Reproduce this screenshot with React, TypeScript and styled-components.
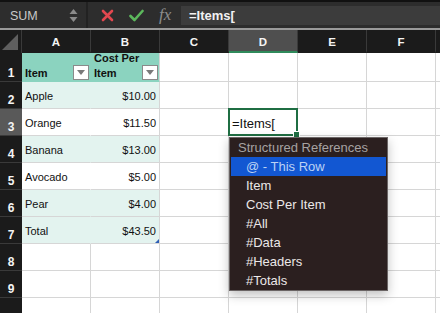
import React from 'react';
import styled, {createGlobalStyle} from 'styled-components';

const GlobalStyle = createGlobalStyle`
  html, body {
    margin: 0;
    padding: 0;
    width: 440px;
    height: 313px;
    overflow: hidden;
    background: #ffffff;
    font-family: "Liberation Sans", Arial, sans-serif;
  }
`;

const COLS = ['A', 'B', 'C', 'D', 'E', 'F'];

type Fill = 'head' | 'band' | 'plain' | 'none';

const rows: {cells: [string, string]; fill: Fill}[] = [
    {cells: ['Item', 'Cost Per Item'], fill: 'head'},
    {cells: ['Apple', '$10.00'], fill: 'band'},
    {cells: ['Orange', '$11.50'], fill: 'plain'},
    {cells: ['Banana', '$13.00'], fill: 'band'},
    {cells: ['Avocado', '$5.00'], fill: 'plain'},
    {cells: ['Pear', '$4.00'], fill: 'band'},
    {cells: ['Total', '$43.50'], fill: 'band'},
    {cells: ['', ''], fill: 'none'},
    {cells: ['', ''], fill: 'none'},
    {cells: ['', ''], fill: 'none'},
];

const menuItems = ['Item', 'Cost Per Item', '#All', '#Data', '#Headers', '#Totals'];

const fillColor = (f: Fill) =>
    f === 'head' ? '#8bd3bf' : f === 'band' ? '#e3f3ef' : '#ffffff';

const App = () => {
    return (
        <>
            <GlobalStyle/>
            <Page>
                <Toolbar>
                    <NameBox>
                        <span>SUM</span>
                        <svg width="9" height="15" viewBox="0 0 9 15">
                            <path d="M4.5 1 L8.5 6 L0.5 6 Z" fill="#8a8a8a"/>
                            <path d="M4.5 14 L8.5 9 L0.5 9 Z" fill="#8a8a8a"/>
                        </svg>
                    </NameBox>
                    <Divider/>
                    <IconSlot $ml={13} $w={13}>
                        <svg width="13" height="13" viewBox="0 0 13 13">
                            <path d="M2 2 L11 11 M11 2 L2 11" stroke="#e2474f" strokeWidth="2.6"
                                  strokeLinecap="round"/>
                        </svg>
                    </IconSlot>
                    <IconSlot $ml={15} $w={15}>
                        <svg width="15" height="13" viewBox="0 0 15 13">
                            <path d="M1.5 7 L5.5 11 L13.5 2" stroke="#5cb85c" strokeWidth="2.6" fill="none"
                                  strokeLinecap="round" strokeLinejoin="round"/>
                        </svg>
                    </IconSlot>
                    <Fx>fx</Fx>
                    <FormulaInput>=Items[</FormulaInput>
                </Toolbar>
                <Rule/>
                <Sheet>
                    <Corner>
                        <svg width="16" height="16" viewBox="0 0 16 16">
                            <path d="M16 0 L16 16 L0 16 Z" fill="#5f5f5f"/>
                        </svg>
                    </Corner>
                    {COLS.map(c => (
                        <ColHead key={c} $active={c === 'D'}>{c}</ColHead>
                    ))}
                    <ColHead $active={false}/>
                    {rows.map((r, i) => {
                        const n = i + 1;
                        return (
                            <React.Fragment key={n}>
                                {/* row 10 sits below the fold; its number is out of view */}
                                <RowHead $active={n === 3}>{n < 10 ? n : ''}</RowHead>
                                <Cell $fill={r.fill} $joined={r.fill !== 'none'} $bold={r.fill === 'head'}>
                                    {r.fill === 'head' ? <HeadText>{r.cells[0]}</HeadText> : r.cells[0]}
                                    {r.fill === 'head' && <FilterButton/>}
                                </Cell>
                                <Cell $fill={r.fill} $bold={r.fill === 'head'}
                                      $right={r.fill !== 'head' && r.fill !== 'none'}>
                                    {r.fill === 'head' ? (<HeadText>Cost Per<br/>Item</HeadText>) : r.cells[1]}
                                    {r.fill === 'head' && <FilterButton/>}
                                    {n === 7 && <ResizeMark/>}
                                </Cell>
                                <Cell $fill="none"/>
                                {n === 3 ? (
                                    <ActiveCell>=Items[<FillHandle/></ActiveCell>
                                ) : (
                                    <Cell $fill="none"/>
                                )}
                                <Cell $fill="none"/>
                                <Cell $fill="none"/>
                                <Cell $fill="none"/>
                            </React.Fragment>
                        );
                    })}
                    <Menu>
                        <MenuHeader>Structured References</MenuHeader>
                        <MenuItem $selected>@ - This Row</MenuItem>
                        {menuItems.map(m => (
                            <MenuItem key={m} $selected={false}>{m}</MenuItem>
                        ))}
                    </Menu>
                </Sheet>
            </Page>
        </>
    );
};

export default App;

const Page = styled.div`
  width: 440px;
  height: 313px;
  overflow: hidden;
  display: flex;
  flex-direction: column;
`;

const Toolbar = styled.div`
  flex-shrink: 0;
  height: 26px;
  border-top: 2px solid #111111;
  background: #2d2d2d;
  display: flex;
  align-items: center;
`;

const NameBox = styled.div`
  width: 86px;
  box-sizing: border-box;
  height: 100%;
  padding: 0 8px 0 10px;
  display: flex;
  align-items: center;
  justify-content: space-between;
  color: #c9c9c9;
  font-size: 12.5px;
  span {
    margin-top: 1px;
  }
`;

const Divider = styled.div`
  width: 2px;
  height: 100%;
  background: #222222;
`;

const IconSlot = styled.div<{ $ml: number; $w: number }>`
  margin-left: ${p => p.$ml}px;
  width: ${p => p.$w}px;
  display: flex;
  align-items: center;
  justify-content: center;
`;

const Fx = styled.div`
  margin-left: 15px;
  width: 16px;
  color: #8c8c8c;
  font-family: "Liberation Serif", "DejaVu Serif", serif;
  font-style: italic;
  font-size: 17px;
  line-height: 1;
  margin-top: -2px;
`;

const FormulaInput = styled.div`
  margin-left: 6px;
  flex: 1;
  height: 19px;
  background: #3c3c3c;
  color: #f2f2f2;
  font-size: 13px;
  font-weight: bold;
  display: flex;
  align-items: center;
  padding-left: 8px;
`;

const Rule = styled.div`
  flex-shrink: 0;
  height: 2px;
  background: #9a9a9a;
`;

const Sheet = styled.div`
  position: relative;
  flex: 1;
  min-height: 0;
  display: grid;
  grid-template-columns: 22px repeat(6, 69px) 1fr;
  grid-template-rows: 23px 29px repeat(9, 27px) 27px;
`;

const Corner = styled.div`
  background: #1b1b1b;
  border-right: 1px solid #3a3a3a;
  display: flex;
  align-items: flex-end;
  justify-content: flex-end;
  padding: 0 3px 3px 0;
`;

const ColHead = styled.div<{ $active?: boolean }>`
  background: ${p => p.$active ? '#4f4f4f' : '#1b1b1b'};
  border-right: 1px solid #3a3a3a;
  border-bottom: 2px solid ${p => p.$active ? '#2f8a5b' : '#1b1b1b'};
  color: #f4f4f4;
  font-size: 11.5px;
  font-weight: bold;
  display: flex;
  align-items: center;
  justify-content: center;
  padding-top: 2px;
`;

const RowHead = styled.div<{ $active: boolean }>`
  background: ${p => p.$active ? '#595959' : '#1b1b1b'};
  border-bottom: 1px solid #3a3a3a;
  color: #f4f4f4;
  font-size: 12px;
  font-weight: bold;
  display: flex;
  align-items: flex-end;
  justify-content: center;
  padding-bottom: 1px;
`;

const Cell = styled.div<{ $fill: Fill; $joined?: boolean; $bold?: boolean; $right?: boolean }>`
  position: relative;
  background: ${p => fillColor(p.$fill)};
  border-bottom: 1px solid ${p => p.$fill === 'head' ? '#8bd3bf' : '#d6d6d6'};
  border-right: 1px solid ${p => p.$joined ? fillColor(p.$fill) : '#d6d6d6'};
  color: #111111;
  font-size: 11px;
  font-weight: ${p => p.$bold ? 'bold' : 'normal'};
  display: flex;
  align-items: ${p => p.$bold ? 'flex-end' : 'center'};
  justify-content: ${p => p.$right ? 'flex-end' : 'flex-start'};
  padding: ${p => p.$bold ? '0 0 0 3px' : '2px 3px 0 3px'};
  white-space: nowrap;
`;

const HeadText = styled.span`
  line-height: 15px;
`;

const FilterButton = styled.div`
  position: absolute;
  right: 1px;
  bottom: 1px;
  width: 14px;
  height: 13px;
  background: #ffffff;
  border: 1px solid #8a8a8a;
  &::after {
    content: '';
    position: absolute;
    left: 3px;
    top: 4px;
    border-left: 4px solid transparent;
    border-right: 4px solid transparent;
    border-top: 5px solid #7a7a7a;
  }
`;

const ResizeMark = styled.div`
  position: absolute;
  right: 0;
  bottom: 0;
  width: 0;
  height: 0;
  border-left: 4px solid transparent;
  border-bottom: 4px solid #2f5fb5;
`;

const ActiveCell = styled.div`
  position: relative;
  z-index: 1;
  border: 2px solid #1f6e43;
  margin: -1px 0 0 -1px;
  background: #ffffff;
  color: #111111;
  font-size: 13px;
  display: flex;
  align-items: center;
  padding: 2px 0 0 2px;
`;

const FillHandle = styled.div`
  position: absolute;
  right: -4px;
  bottom: -4px;
  width: 5px;
  height: 5px;
  background: #1f6e43;
  border: 1px solid #ffffff;
`;

const Menu = styled.div`
  position: absolute;
  left: 229px;
  top: 107px;
  width: 157px;
  background: #2b1f1f;
  border: 1px solid #6a6464;
  box-shadow: 0 4px 10px rgba(0, 0, 0, 0.25);
  z-index: 2;
  font-size: 13px;
`;

const MenuHeader = styled.div`
  height: 19px;
  line-height: 19px;
  padding-left: 8px;
  color: #a6a2a2;
`;

const MenuItem = styled.div<{ $selected: boolean }>`
  height: 19px;
  line-height: 19px;
  padding-left: 15px;
  margin: 0 1px;
  background: ${p => p.$selected ? '#1257d2' : 'transparent'};
  color: ${p => p.$selected ? '#bcd2f4' : '#ece8e8'};
`;
